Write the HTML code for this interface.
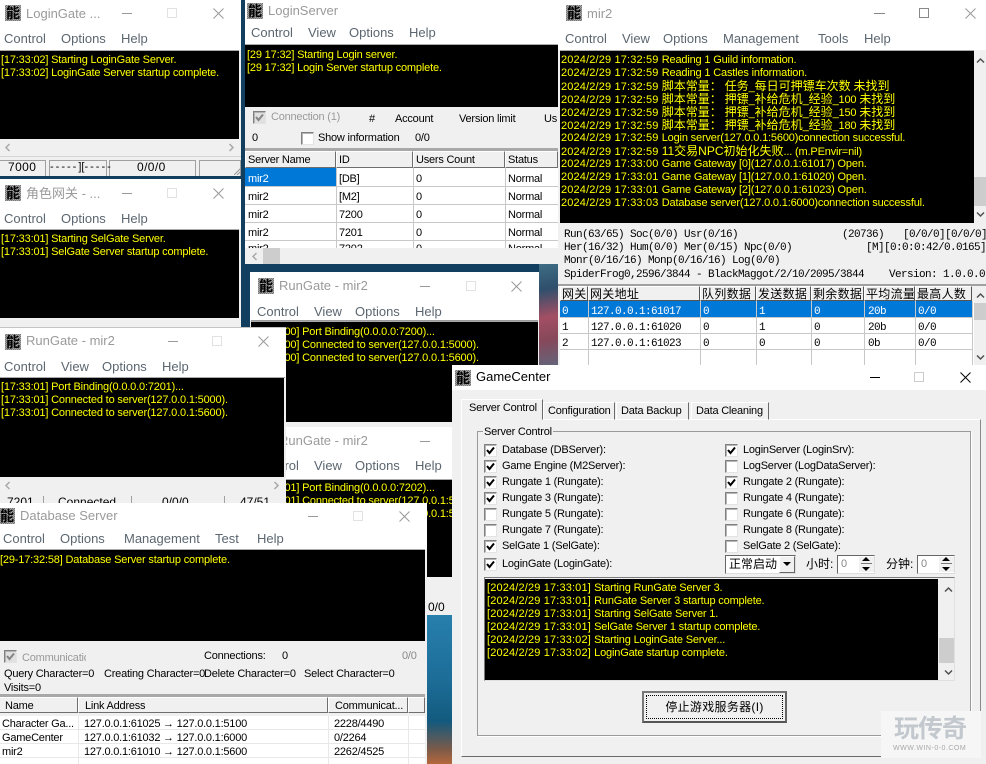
<!DOCTYPE html>
<html><head><meta charset="utf-8"><style>
html,body{margin:0;padding:0;background:#123e60}
#p{position:relative;width:986px;height:764px;overflow:hidden;background:#123e60;font-family:"Liberation Sans","Noto Sans CJK SC",sans-serif}
#p div,#p span,#p svg{position:absolute;white-space:nowrap;box-sizing:border-box}
#p b{font-weight:400}
#p b.z{font-size:12px;letter-spacing:0}
#p em{font-style:normal;letter-spacing:.15px}
.w{background:#f0f0f0;overflow:hidden}
.b{background:#fff}
.k{background:#000;overflow:hidden;box-shadow:0 -1px 0 #aaa}
.t{font-size:13px;line-height:16px;height:16px;color:#9a9a9a}
.m{font-size:13px;line-height:16px;height:16px;color:#5b6670}
.i{width:16px;height:16px;background:repeating-conic-gradient(#777 0 25%,#a8a8a8 0 50%) 0 0/2px 2px;color:#000;font-size:14px;line-height:16px;text-align:center;font-family:"Noto Sans CJK SC",sans-serif;font-weight:700;overflow:hidden}
.l{font-size:11px;line-height:13px;color:#ff0;letter-spacing:-.17px;height:13px;margin-top:1px}
.g{font-size:11px;line-height:14px;height:14px;color:#000;letter-spacing:-.22px}
.c{width:13px;height:13px;background:#fff;border:1px solid;border-color:#808080 #e3e3e3 #e3e3e3 #808080;box-shadow:inset 1px 1px 0 #b4b4b4}
.s{font-size:11px;line-height:14px;height:14px;color:#000;letter-spacing:-.22px}
.h{background:#f0f0f0;border:1px solid;border-color:#fff #6e6e6e #6e6e6e #fff;font-size:11px;line-height:16px;color:#000;padding-left:2px;overflow:hidden;letter-spacing:-.22px}
.r{background:#fff;overflow:hidden}
.ln{background:#c8c8c8}
.mono{font-family:"Liberation Mono","Noto Sans CJK SC",monospace;font-size:11px;letter-spacing:-.6px;line-height:13px;height:13px;color:#000;margin-top:2px}
.mt{font-family:"Liberation Mono",monospace;font-size:11px;letter-spacing:-.6px;line-height:16px;height:16px;color:#000;margin-top:2px}
.mh{font-size:12px;line-height:15px;height:15px;color:#000;background:#f0f0f0;border:1px solid;border-color:#fff #555 #555 #fff;padding-left:1px;overflow:hidden;letter-spacing:.3px}
</style></head><body><div id="p">
<svg width="0" height="0" style="left:0;top:0"><defs>
<symbol id="x" viewBox="0 0 11 11"><path d="M.5.5l10 10M10.500.5l-10 10" stroke="currentColor" fill="none"/></symbol>
<symbol id="cl" viewBox="0 0 7 9"><path d="M5.500 1L2 4.500 5.500 8" stroke="#a9a9a9" stroke-width="1.500" fill="none"/></symbol>
<symbol id="cr" viewBox="0 0 7 9"><path d="M1.500 1L5 4.500 1.500 8" stroke="#a9a9a9" stroke-width="1.500" fill="none"/></symbol>
<symbol id="cu" viewBox="0 0 9 7"><path d="M1 5.500L4.500 2 8 5.500" stroke="#505050" stroke-width="1.500" fill="none"/></symbol>
<symbol id="cd" viewBox="0 0 9 7"><path d="M1 1.500L4.500 5 8 1.500" stroke="#505050" stroke-width="1.500" fill="none"/></symbol>
<symbol id="ck" viewBox="0 0 11 11"><path d="M2 5l2.500 3L9 2.500" stroke="#000" stroke-width="2" fill="none"/></symbol>
</defs></svg>

<!-- wallpaper -->
<div style="left:539px;top:262px;width:20px;height:110px;background:linear-gradient(170deg,#3f6f86 0%,#2f4f6c 25%,#a34f63 50%,#86485a 70%,#5b6c82 100%)"></div>
<div style="left:427px;top:612px;width:26px;height:152px;background:linear-gradient(180deg,#2880ad 0%,#1c6d98 45%,#135a7e 72%,#7a5a4a 90%,#b5683c 100%)"></div>

<!-- LoginServer -->
<div class="w" style="left:245px;top:0;width:313px;height:264px">
 <div class="b" style="left:0;top:0;width:313px;height:44px"></div>
 <div class="i" style="left:2px;top:3px">能</div>
 <div class="t" style="left:23px;top:3px">LoginServer</div>
 <span class="m" style="left:6px;top:25px">Control</span><span class="m" style="left:63px;top:25px">View</span><span class="m" style="left:104px;top:25px">Options</span><span class="m" style="left:164px;top:25px">Help</span>
 <div class="k" style="left:0;top:45px;width:313px;height:62px">
  <div class="l" style="left:2px;top:3px">[29 17:32] Starting Login server.</div>
  <div class="l" style="left:2px;top:16px">[29 17:32] Login Server startup complete.</div>
 </div>
 <div class="c" style="left:8px;top:111px;background:#e0e0e0"><svg width="11" height="11" style="left:0;top:0"><use href="#ck" style="opacity:.4"/></svg></div>
 <span class="g" style="left:26px;top:110px;color:#9a9a9a">Connection (1)</span>
 <span class="g" style="left:124px;top:112px">#</span><span class="g" style="left:150px;top:112px">Account</span><span class="g" style="left:214px;top:112px">Version limit</span><span class="g" style="left:299px;top:112px">Us</span>
 <span class="g" style="left:7px;top:131px">0</span>
 <div class="c" style="left:56px;top:132px"></div><span class="g" style="left:73px;top:131px">Show information</span><span class="g" style="left:170px;top:131px">0/0</span>
 <div class="r" style="left:0;top:148px;width:313px;height:100px"></div>
 <div class="ln" style="left:0;top:148px;width:313px;height:3px;background:#a8a8a8"></div>
 <div class="h" style="left:0;top:151px;width:91px;height:17px">Server Name</div><div class="h" style="left:91px;top:151px;width:77px;height:17px">ID</div><div class="h" style="left:168px;top:151px;width:92px;height:17px">Users Count</div><div class="h" style="left:260px;top:151px;width:53px;height:17px">Status</div>
 <div style="left:0;top:168px;width:91px;height:18px;background:#0078d7"></div>
 <div class="ln" style="left:0;top:186px;width:313px;height:1px"></div><div class="ln" style="left:0;top:204px;width:313px;height:1px"></div><div class="ln" style="left:0;top:222px;width:313px;height:1px"></div><div class="ln" style="left:0;top:240px;width:313px;height:1px"></div>
 <div class="ln" style="left:91px;top:168px;width:1px;height:80px"></div><div class="ln" style="left:168px;top:168px;width:1px;height:80px"></div><div class="ln" style="left:260px;top:168px;width:1px;height:80px"></div>
 <span class="g" style="left:3px;top:172px;color:#fff">mir2</span><span class="g" style="left:94px;top:172px">[DB]</span><span class="g" style="left:171px;top:172px">0</span><span class="g" style="left:263px;top:172px">Normal</span>
 <span class="g" style="left:3px;top:190px">mir2</span><span class="g" style="left:94px;top:190px">[M2]</span><span class="g" style="left:171px;top:190px">0</span><span class="g" style="left:263px;top:190px">Normal</span>
 <span class="g" style="left:3px;top:208px">mir2</span><span class="g" style="left:94px;top:208px">7200</span><span class="g" style="left:171px;top:208px">0</span><span class="g" style="left:263px;top:208px">Normal</span>
 <span class="g" style="left:3px;top:226px">mir2</span><span class="g" style="left:94px;top:226px">7201</span><span class="g" style="left:171px;top:226px">0</span><span class="g" style="left:263px;top:226px">Normal</span>
 <span class="g" style="left:3px;top:242px">mir2</span><span class="g" style="left:94px;top:242px">7202</span><span class="g" style="left:171px;top:242px">0</span><span class="g" style="left:263px;top:242px">Normal</span>
 <div style="left:0;top:248px;width:313px;height:16px;background:#f0f0f0"></div>
 <svg width="7" height="9" style="left:6px;top:252px"><use href="#cl"/></svg>
 <div style="left:18px;top:248px;width:17px;height:16px;background:#cdcdcd"></div>
</div>

<!-- LoginGate -->
<div class="w" style="left:0;top:0;width:241px;height:176px">
 <div class="b" style="left:0;top:0;width:241px;height:50px"></div>
 <div class="i" style="left:5px;top:5px">能</div>
 <div class="t" style="left:26px;top:6px">LoginGate ...</div>
 <div style="left:122px;top:13px;width:10px;height:1px;background:#999"></div><div style="left:167px;top:8px;width:10px;height:10px;border:1px solid #e2e2e2"></div><svg width="11" height="11" style="left:213px;top:8px;color:#999"><use href="#x"/></svg>
 <span class="m" style="left:4px;top:31px">Control</span><span class="m" style="left:61px;top:31px">Options</span><span class="m" style="left:121px;top:31px">Help</span>
 <div class="k" style="left:0;top:51px;width:239px;height:88px">
  <div class="l" style="left:1px;top:2px">[17:33:02] Starting LoginGate Server.</div>
  <div class="l" style="left:1px;top:15px">[17:33:02] LoginGate Server startup complete.</div>
 </div>
 <svg width="7" height="9" style="left:4px;top:143px"><use href="#cl"/></svg><svg width="7" height="9" style="left:228px;top:143px"><use href="#cr"/></svg>
 <div style="left:0;top:156px;width:241px;height:1px;background:#d5d5d5"></div>
 <div style="left:0;top:160px;width:46px;height:16px;border-top:1px solid #a0a0a0;border-right:1px solid #a0a0a0"></div><div style="left:49px;top:160px;width:58px;height:16px;border:1px solid #a0a0a0;border-bottom:0"></div><div style="left:109px;top:160px;width:87px;height:16px;border:1px solid #a0a0a0;border-bottom:0"></div><div style="left:199px;top:160px;width:42px;height:16px;border:1px solid #a0a0a0;border-bottom:0"></div>
 <span class="s" style="left:8px;top:160px;font-size:12px;letter-spacing:.4px">7000</span><span class="s" style="left:50px;top:160px;font-size:11px;letter-spacing:2px">-----<b style="letter-spacing:0">][</b>-----</span><span class="s" style="left:137px;top:160px;font-size:12px;letter-spacing:.4px">0/0/0</span>
 <svg width="7" height="7" style="left:234px;top:168px"><path d="M7 0L0 7M7 3L3 7M7 6L6 7" stroke="#999" fill="none"/></svg>
</div>

<!-- SelGate -->
<div class="w" style="left:0;top:179px;width:241px;height:155px">
 <div class="b" style="left:0;top:0;width:241px;height:50px"></div>
 <div class="i" style="left:5px;top:6px">能</div>
 <div class="t" style="left:26px;top:7px">角色网关 - ...</div>
 <div style="left:122px;top:14px;width:10px;height:1px;background:#999"></div><div style="left:167px;top:9px;width:10px;height:10px;border:1px solid #e2e2e2"></div><svg width="11" height="11" style="left:213px;top:9px;color:#999"><use href="#x"/></svg>
 <span class="m" style="left:4px;top:32px">Control</span><span class="m" style="left:61px;top:32px">Options</span><span class="m" style="left:121px;top:32px">Help</span>
 <div class="k" style="left:0;top:51px;width:239px;height:88px">
  <div class="l" style="left:1px;top:2px">[17:33:01] Starting SelGate Server.</div>
  <div class="l" style="left:1px;top:15px">[17:33:01] SelGate Server startup complete.</div>
 </div>
</div>

<!-- RunGate 7200 -->
<div class="w" style="left:250px;top:272px;width:289px;height:155px">
 <div class="b" style="left:0;top:0;width:289px;height:48px"></div>
 <div class="i" style="left:8px;top:6px">能</div>
 <div class="t" style="left:29px;top:6px">RunGate - mir2</div>
 <div style="left:170px;top:14px;width:10px;height:1px;background:#999"></div><div style="left:216px;top:9px;width:10px;height:10px;border:1px solid #e2e2e2"></div><svg width="11" height="11" style="left:261px;top:9px;color:#999"><use href="#x"/></svg>
 <span class="m" style="left:7px;top:32px">Control</span><span class="m" style="left:64px;top:32px">View</span><span class="m" style="left:105px;top:32px">Options</span><span class="m" style="left:165px;top:32px">Help</span>
 <div style="left:1px;top:48px;width:287px;height:2px;background:#9a9a9a"></div>
 <div class="k" style="left:1px;top:50px;width:287px;height:100px">
  <div class="l" style="left:1px;top:3px">[17:33:00] Port Binding(0.0.0.0:7200)...</div>
  <div class="l" style="left:1px;top:16px">[17:33:00] Connected to server(127.0.0.1:5000).</div>
  <div class="l" style="left:1px;top:29px">[17:33:00] Connected to server(127.0.0.1:5600).</div>
 </div>
</div>

<!-- RunGate 7202 -->
<div class="w" style="left:250px;top:427px;width:202px;height:188px">
 <div class="b" style="left:0;top:0;width:202px;height:52px"></div>
 <div class="t" style="left:29px;top:6px">RunGate - mir2</div>
 <div style="left:170px;top:14px;width:10px;height:1px;background:#999"></div>
 <span class="m" style="left:7px;top:31px">Control</span><span class="m" style="left:64px;top:31px">View</span><span class="m" style="left:105px;top:31px">Options</span><span class="m" style="left:165px;top:31px">Help</span>
 <div class="k" style="left:1px;top:53px;width:201px;height:97px">
  <div class="l" style="left:1px;top:1px">[17:33:01] Port Binding(0.0.0.0:7202)...</div>
  <div class="l" style="left:1px;top:14px">[17:33:01] Connected to server(127.0.0.1:5000).</div>
  <div class="l" style="left:1px;top:27px">[17:33:01] Connected to server(127.0.0.1:5600).</div>
 </div>
 <span class="s" style="left:178px;top:173px;font-size:12px;letter-spacing:0">0/0</span>
</div>

<!-- RunGate 7201 -->
<div class="w" style="left:0;top:327px;width:286px;height:180px;border-top:1px solid #c4c4c4">
 <div class="b" style="left:0;top:0;width:286px;height:49px"></div>
 <div class="i" style="left:5px;top:6px">能</div>
 <div class="t" style="left:26px;top:5px">RunGate - mir2</div>
 <div style="left:168px;top:13px;width:10px;height:1px;background:#999"></div><div style="left:212px;top:8px;width:10px;height:10px;border:1px solid #e2e2e2"></div><svg width="11" height="11" style="left:258px;top:8px;color:#999"><use href="#x"/></svg>
 <span class="m" style="left:4px;top:31px">Control</span><span class="m" style="left:61px;top:31px">View</span><span class="m" style="left:102px;top:31px">Options</span><span class="m" style="left:162px;top:31px">Help</span>
 <div style="left:0;top:49px;width:285px;height:1px;background:#9a9a9a"></div>
 <div class="k" style="left:0;top:50px;width:284px;height:99px">
  <div class="l" style="left:1px;top:2px">[17:33:01] Port Binding(0.0.0.0:7201)...</div>
  <div class="l" style="left:1px;top:15px">[17:33:01] Connected to server(127.0.0.1:5000).</div>
  <div class="l" style="left:1px;top:28px">[17:33:01] Connected to server(127.0.0.1:5600).</div>
 </div>
 <svg width="7" height="9" style="left:4px;top:153px"><use href="#cl"/></svg><svg width="7" height="9" style="left:273px;top:153px"><use href="#cr"/></svg>
 <span class="s" style="left:7px;top:167px;font-size:12px;letter-spacing:0">7201</span><span class="s" style="left:58px;top:167px;font-size:12px;letter-spacing:0">Connected</span><span class="s" style="left:162px;top:167px;font-size:12px;letter-spacing:0">0/0/0</span><span class="s" style="left:240px;top:167px;font-size:12px;letter-spacing:0">47/51</span>
 <div style="left:43px;top:168px;width:1px;height:10px;background:#a0a0a0"></div><div style="left:131px;top:168px;width:1px;height:10px;background:#a0a0a0"></div><div style="left:224px;top:168px;width:1px;height:10px;background:#a0a0a0"></div>
</div>

<!-- Database Server -->
<div class="w" style="left:0;top:503px;width:427px;height:261px">
 <div class="b" style="left:0;top:0;width:427px;height:46px"></div>
 <div class="i" style="left:-1px;top:5px">能</div>
 <div class="t" style="left:20px;top:5px">Database Server</div>
 <div style="left:308px;top:13px;width:10px;height:1px;background:#999"></div><div style="left:353px;top:8px;width:10px;height:10px;border:1px solid #e2e2e2"></div><svg width="11" height="11" style="left:399px;top:8px;color:#999"><use href="#x"/></svg>
 <span class="m" style="left:3px;top:28px">Control</span><span class="m" style="left:60px;top:28px">Options</span><span class="m" style="left:124px;top:28px">Management</span><span class="m" style="left:215px;top:28px">Test</span><span class="m" style="left:257px;top:28px">Help</span>
 <div class="k" style="left:0;top:47px;width:425px;height:91px">
  <div class="l" style="left:0;top:3px">[29-17:32:58] Database Server startup complete.</div>
 </div>
 <div class="c" style="left:4px;top:147px;background:#e0e0e0"><svg width="11" height="11" style="left:0;top:0"><use href="#ck" style="opacity:.4"/></svg></div>
 <span class="g" style="left:22px;top:148px;width:64px;overflow:hidden;color:#9a9a9a">Communication</span>
 <span class="g" style="left:204px;top:146px">Connections:</span><span class="g" style="left:282px;top:146px">0</span><span class="g" style="left:402px;top:146px;color:#888">0/0</span>
 <span class="g" style="left:4px;top:164px">Query Character=0</span><span class="g" style="left:104px;top:164px">Creating Character=0</span><span class="g" style="left:204px;top:164px">Delete Character=0</span><span class="g" style="left:304px;top:164px">Select Character=0</span>
 <span class="g" style="left:4px;top:178px">Visits=0</span>
 <div class="r" style="left:0;top:191px;width:425px;height:70px"></div>
 <div style="left:0;top:191px;width:425px;height:3px;background:#a8a8a8"></div>
 <div class="h" style="left:-1px;top:194px;width:79px;height:16px;padding-left:5px">Name</div><div class="h" style="left:78px;top:194px;width:250px;height:16px;padding-left:6px">Link Address</div><div class="h" style="left:328px;top:194px;width:80px;height:16px;padding-left:6px">Communicat...</div><div class="h" style="left:408px;top:194px;width:17px;height:16px"></div>
 <div style="left:0;top:210px;width:425px;height:3px;background:#f0f0f0"></div>
 <div class="ln" style="left:0;top:226px;width:425px;height:1px;background:#e8e8e8"></div><div class="ln" style="left:0;top:240px;width:425px;height:1px;background:#e8e8e8"></div><div class="ln" style="left:0;top:254px;width:425px;height:1px;background:#e8e8e8"></div>
 <div class="ln" style="left:78px;top:213px;width:1px;height:48px;background:#e8e8e8"></div><div class="ln" style="left:328px;top:213px;width:1px;height:48px;background:#e8e8e8"></div><div class="ln" style="left:408px;top:213px;width:1px;height:48px;background:#e8e8e8"></div>
 <span class="g" style="left:2px;top:214px">Character Ga...</span><span class="g" style="left:84px;top:214px">127.0.0.1:61025 → 127.0.0.1:5100</span><span class="g" style="left:334px;top:214px">2228/4490</span>
 <span class="g" style="left:2px;top:228px">GameCenter</span><span class="g" style="left:84px;top:228px">127.0.0.1:61032 → 127.0.0.1:6000</span><span class="g" style="left:334px;top:228px">0/2264</span>
 <span class="g" style="left:2px;top:242px">mir2</span><span class="g" style="left:84px;top:242px">127.0.0.1:61010 → 127.0.0.1:5600</span><span class="g" style="left:334px;top:242px">2262/4525</span>
</div>

<!-- mir2 -->
<div class="w" style="left:558px;top:0;width:428px;height:365px">
 <div class="b" style="left:0;top:0;width:428px;height:50px"></div>
 <div class="i" style="left:8px;top:5px">能</div>
 <div class="t" style="left:29px;top:6px">mir2</div>
 <div style="left:316px;top:13px;width:11px;height:1px;background:#888"></div><div style="left:361px;top:8px;width:10px;height:10px;border:1px solid #888"></div><svg width="11" height="11" style="left:407px;top:8px;color:#999"><use href="#x"/></svg>
 <span class="m" style="left:7px;top:31px">Control</span><span class="m" style="left:64px;top:31px">View</span><span class="m" style="left:105px;top:31px">Options</span><span class="m" style="left:165px;top:31px">Management</span><span class="m" style="left:260px;top:31px">Tools</span><span class="m" style="left:306px;top:31px">Help</span>
 <div class="k" style="left:2px;top:51px;width:414px;height:172px">
  <div class="l" style="left:1px;top:2px"><em>2024/2/29 17:32:59 </em>Reading 1 Guild information.</div>
  <div class="l" style="left:1px;top:15px"><em>2024/2/29 17:32:59 </em>Reading 1 Castles information.</div>
  <div class="l" style="left:1px;top:28px"><em>2024/2/29 17:32:59 </em><b class="z">脚本常量：</b> <b class="z">任务</b>_<b class="z">每日可押镖车次数</b> <b class="z">未找到</b></div>
  <div class="l" style="left:1px;top:41px"><em>2024/2/29 17:32:59 </em><b class="z">脚本常量：</b> <b class="z">押镖</b>_<b class="z">补给危机</b>_<b class="z">经验</b>_100 <b class="z">未找到</b></div>
  <div class="l" style="left:1px;top:54px"><em>2024/2/29 17:32:59 </em><b class="z">脚本常量：</b> <b class="z">押镖</b>_<b class="z">补给危机</b>_<b class="z">经验</b>_150 <b class="z">未找到</b></div>
  <div class="l" style="left:1px;top:67px"><em>2024/2/29 17:32:59 </em><b class="z">脚本常量：</b> <b class="z">押镖</b>_<b class="z">补给危机</b>_<b class="z">经验</b>_180 <b class="z">未找到</b></div>
  <div class="l" style="left:1px;top:80px"><em>2024/2/29 17:32:59 </em>Login server(127.0.0.1:5600)connection successful.</div>
  <div class="l" style="left:1px;top:93px"><em>2024/2/29 17:32:59 </em><b class="z">11交易NPC初始化失败</b>... (m.PEnvir=nil)</div>
  <div class="l" style="left:1px;top:106px"><em>2024/2/29 17:33:00 </em>Game Gateway [0](127.0.0.1:61017) Open.</div>
  <div class="l" style="left:1px;top:119px"><em>2024/2/29 17:33:01 </em>Game Gateway [1](127.0.0.1:61020) Open.</div>
  <div class="l" style="left:1px;top:132px"><em>2024/2/29 17:33:01 </em>Game Gateway [2](127.0.0.1:61023) Open.</div>
  <div class="l" style="left:1px;top:145px"><em>2024/2/29 17:33:03 </em>Database server(127.0.0.1:6000)connection successful.</div>
 </div>
 <svg width="9" height="7" style="left:418px;top:57px"><use href="#cu"/></svg>
 <div style="left:416px;top:177px;width:12px;height:29px;background:#cdcdcd"></div>
 <svg width="9" height="7" style="left:418px;top:211px"><use href="#cd"/></svg>
 <span class="mono" style="left:6px;top:227px">Run(63/65) Soc(0/0) Usr(0/16)</span><span class="mono" style="left:284px;top:227px">(20736)</span><span class="mono" style="left:345px;top:227px">[0/0/0][0/0/0]</span>
 <span class="mono" style="left:6px;top:240px">Her(16/32) Hum(0/0) Mer(0/15) Npc(0/0)</span><span class="mono" style="left:308px;top:240px">[M][0:0:0:42/0.0165]</span>
 <span class="mono" style="left:6px;top:253px">Monr(0/16/16) Monp(0/16/16) Log(0/0)</span>
 <span class="mono" style="left:6px;top:267px">SpiderFrog0,2596/3844 - BlackMaggot/2/10/2095/3844</span><span class="mono" style="left:331px;top:267px">Version: 1.0.0.0</span>
 <div style="left:0;top:284px;width:428px;height:2px;background:#a0a0a0"></div>
 <div class="r" style="left:2px;top:301px;width:414px;height:64px"></div>
 <div class="mh" style="left:2px;top:286px;width:28px;height:15px">网关</div><div class="mh" style="left:30px;top:286px;width:112px;height:15px">网关地址</div><div class="mh" style="left:142px;top:286px;width:56px;height:15px">队列数据</div><div class="mh" style="left:198px;top:286px;width:55px;height:15px">发送数据</div><div class="mh" style="left:253px;top:286px;width:53px;height:15px">剩余数据</div><div class="mh" style="left:306px;top:286px;width:51px;height:15px">平均流量</div><div class="mh" style="left:357px;top:286px;width:57px;height:15px">最高人数</div>
 <div style="left:2px;top:301px;width:412px;height:16px;background:#0078d7"></div>
 <div class="ln" style="left:2px;top:317px;width:412px;height:1px"></div><div class="ln" style="left:2px;top:333px;width:412px;height:1px"></div><div class="ln" style="left:2px;top:349px;width:412px;height:1px"></div>
 <div class="ln" style="left:30px;top:301px;width:1px;height:64px"></div><div class="ln" style="left:142px;top:301px;width:1px;height:64px"></div><div class="ln" style="left:198px;top:301px;width:1px;height:64px"></div><div class="ln" style="left:253px;top:301px;width:1px;height:64px"></div><div class="ln" style="left:306px;top:301px;width:1px;height:64px"></div><div class="ln" style="left:357px;top:301px;width:1px;height:64px"></div><div class="ln" style="left:414px;top:301px;width:1px;height:64px"></div>
 <span class="mt" style="left:4px;top:302px;color:#fff">0</span><span class="mt" style="left:33px;top:302px;color:#fff">127.0.0.1:61017</span><span class="mt" style="left:145px;top:302px;color:#fff">0</span><span class="mt" style="left:201px;top:302px;color:#fff">1</span><span class="mt" style="left:256px;top:302px;color:#fff">0</span><span class="mt" style="left:310px;top:302px;color:#fff">20b</span><span class="mt" style="left:360px;top:302px;color:#fff">0/0</span>
 <span class="mt" style="left:4px;top:318px">1</span><span class="mt" style="left:33px;top:318px">127.0.0.1:61020</span><span class="mt" style="left:145px;top:318px">0</span><span class="mt" style="left:201px;top:318px">1</span><span class="mt" style="left:256px;top:318px">0</span><span class="mt" style="left:310px;top:318px">20b</span><span class="mt" style="left:360px;top:318px">0/0</span>
 <span class="mt" style="left:4px;top:334px">2</span><span class="mt" style="left:33px;top:334px">127.0.0.1:61023</span><span class="mt" style="left:145px;top:334px">0</span><span class="mt" style="left:201px;top:334px">0</span><span class="mt" style="left:256px;top:334px">0</span><span class="mt" style="left:310px;top:334px">0b</span><span class="mt" style="left:360px;top:334px">0/0</span>
 <svg width="9" height="7" style="left:418px;top:292px"><use href="#cu"/></svg>
 <div style="left:416px;top:303px;width:12px;height:17px;background:#cdcdcd"></div>
 <svg width="9" height="7" style="left:418px;top:354px"><use href="#cd"/></svg>
</div>

<!-- GameCenter -->
<div class="w" style="left:452px;top:365px;width:534px;height:399px">
 <div class="b" style="left:0;top:0;width:534px;height:25px"></div>
 <div class="i" style="left:3px;top:5px">能</div>
 <div class="t" style="left:24px;top:4px;color:#000">GameCenter</div>
 <div style="left:418px;top:12px;width:10px;height:1px;background:#000"></div><div style="left:462px;top:7px;width:10px;height:10px;border:1px solid #ccc"></div><svg width="11" height="11" style="left:508px;top:7px;color:#000"><use href="#x"/></svg>
 <!-- tabs / page -->
 <div style="left:9px;top:54px;width:520px;height:338px;border:1px solid;border-color:#fff #8a8a8a #6a6a6a #fff"></div>
 <div class="s" style="left:9px;top:34px;width:82px;height:21px;background:#f0f0f0;border:1px solid;border-color:#fff #6a6a6a #f0f0f0 #fff;line-height:16px;padding-left:7px">Server Control</div>
 <div class="s" style="left:91px;top:37px;width:72px;height:18px;border:1px solid;border-color:#fff #6a6a6a #fff #fff;line-height:16px;padding-left:4px">Configuration</div>
 <div class="s" style="left:164px;top:37px;width:73px;height:18px;border:1px solid;border-color:#fff #6a6a6a #fff #fff;line-height:16px;padding-left:4px">Data Backup</div>
 <div class="s" style="left:239px;top:37px;width:78px;height:18px;border:1px solid;border-color:#fff #6a6a6a #fff #fff;line-height:16px;padding-left:4px">Data Cleaning</div>
 <!-- group -->
 <div style="left:25px;top:66px;width:494px;height:305px;border:1px solid #9a9a9a;box-shadow:1px 1px 0 #fff"></div>
 <span class="s" style="left:31px;top:60px;background:#f0f0f0;padding:0 1px;height:15px">Server Control</span>
 <div class="c" style="left:32px;top:79px"><svg width="11" height="11" style="left:0;top:0"><use href="#ck"/></svg></div><span class="s" style="left:50px;top:78px">Database (DBServer):</span>
 <div class="c" style="left:32px;top:95px"><svg width="11" height="11" style="left:0;top:0"><use href="#ck"/></svg></div><span class="s" style="left:50px;top:94px">Game Engine (M2Server):</span>
 <div class="c" style="left:32px;top:111px"><svg width="11" height="11" style="left:0;top:0"><use href="#ck"/></svg></div><span class="s" style="left:50px;top:110px">Rungate 1 (Rungate):</span>
 <div class="c" style="left:32px;top:127px"><svg width="11" height="11" style="left:0;top:0"><use href="#ck"/></svg></div><span class="s" style="left:50px;top:126px">Rungate 3 (Rungate):</span>
 <div class="c" style="left:32px;top:143px"></div><span class="s" style="left:50px;top:142px">Rungate 5 (Rungate):</span>
 <div class="c" style="left:32px;top:159px"></div><span class="s" style="left:50px;top:158px">Rungate 7 (Rungate):</span>
 <div class="c" style="left:32px;top:175px"><svg width="11" height="11" style="left:0;top:0"><use href="#ck"/></svg></div><span class="s" style="left:50px;top:174px">SelGate 1 (SelGate):</span>
 <div class="c" style="left:32px;top:193px"><svg width="11" height="11" style="left:0;top:0"><use href="#ck"/></svg></div><span class="s" style="left:50px;top:192px">LoginGate (LoginGate):</span>
 <div class="c" style="left:273px;top:79px"><svg width="11" height="11" style="left:0;top:0"><use href="#ck"/></svg></div><span class="s" style="left:291px;top:78px">LoginServer (LoginSrv):</span>
 <div class="c" style="left:273px;top:95px"></div><span class="s" style="left:291px;top:94px">LogServer (LogDataServer):</span>
 <div class="c" style="left:273px;top:111px"><svg width="11" height="11" style="left:0;top:0"><use href="#ck"/></svg></div><span class="s" style="left:291px;top:110px">Rungate 2 (Rungate):</span>
 <div class="c" style="left:273px;top:127px"></div><span class="s" style="left:291px;top:126px">Rungate 4 (Rungate):</span>
 <div class="c" style="left:273px;top:143px"></div><span class="s" style="left:291px;top:142px">Rungate 6 (Rungate):</span>
 <div class="c" style="left:273px;top:159px"></div><span class="s" style="left:291px;top:158px">Rungate 8 (Rungate):</span>
 <div class="c" style="left:273px;top:175px"></div><span class="s" style="left:291px;top:174px">SelGate 2 (SelGate):</span>
 <!-- combo and spins -->
 <div style="left:273px;top:190px;width:71px;height:19px;background:#fff;border:1px solid;border-color:#666 #ddd #ddd #666;font-size:12px;line-height:17px;padding-left:3px">正常启动</div>
 <div style="left:327px;top:191px;width:16px;height:17px;background:#f0f0f0;border:1px solid;border-color:#fff #666 #666 #fff"></div>
 <div style="left:331px;top:197px;width:0;height:0;border:4px solid transparent;border-top:4px solid #000"></div>
 <span class="s" style="left:354px;top:192px;font-size:12px;letter-spacing:0">小时:</span>
 <div style="left:385px;top:190px;width:38px;height:19px;background:#fff;border:1px solid;border-color:#666 #ddd #ddd #666;font-size:11px;line-height:16px;padding-left:3px;color:#888">0</div>
 <div style="left:407px;top:192px;width:15px;height:15px;background:#f0f0f0"></div>
 <div style="left:410px;top:192px;width:0;height:0;border:4px solid transparent;border-bottom:4px solid #000;border-top:0"></div><div style="left:410px;top:202px;width:0;height:0;border:4px solid transparent;border-top:4px solid #000;border-bottom:0"></div><div style="left:409px;top:198px;width:11px;height:1px;background:#777"></div>
 <span class="s" style="left:434px;top:192px;font-size:12px;letter-spacing:0">分钟:</span>
 <div style="left:465px;top:190px;width:38px;height:19px;background:#fff;border:1px solid;border-color:#666 #ddd #ddd #666;font-size:11px;line-height:16px;padding-left:3px;color:#888">0</div>
 <div style="left:487px;top:192px;width:15px;height:15px;background:#f0f0f0"></div>
 <div style="left:490px;top:192px;width:0;height:0;border:4px solid transparent;border-bottom:4px solid #000;border-top:0"></div><div style="left:490px;top:202px;width:0;height:0;border:4px solid transparent;border-top:4px solid #000;border-bottom:0"></div><div style="left:489px;top:198px;width:11px;height:1px;background:#777"></div>
 <!-- log -->
 <div style="left:32px;top:212px;width:471px;height:104px;background:#f0f0f0;border:1px solid;border-color:#7a7a7a #e0e0e0 #e0e0e0 #7a7a7a"></div>
 <div class="k" style="left:33px;top:214px;width:453px;height:101px;box-shadow:none">
  <div class="l" style="left:2px;top:2px"><em>[2024/2/29 17:33:01] </em>Starting RunGate Server 3.</div>
  <div class="l" style="left:2px;top:15px"><em>[2024/2/29 17:33:01] </em>RunGate Server 3 startup complete.</div>
  <div class="l" style="left:2px;top:28px"><em>[2024/2/29 17:33:01] </em>Starting SelGate Server 1.</div>
  <div class="l" style="left:2px;top:41px"><em>[2024/2/29 17:33:01] </em>SelGate Server 1 startup complete.</div>
  <div class="l" style="left:2px;top:54px"><em>[2024/2/29 17:33:02] </em>Starting LoginGate Server...</div>
  <div class="l" style="left:2px;top:67px"><em>[2024/2/29 17:33:02] </em>LoginGate startup complete.</div>
 </div>
 <svg width="9" height="7" style="left:492px;top:221px"><use href="#cu"/></svg>
 <div style="left:487px;top:273px;width:15px;height:25px;background:#cdcdcd"></div>
 <svg width="9" height="7" style="left:492px;top:304px"><use href="#cd"/></svg>
 <!-- button -->
 <div style="left:190px;top:326px;width:145px;height:32px;background:#f0f0f0;border:2px solid;border-color:#777 #666 #555 #777"></div>
 <div style="left:194px;top:330px;width:137px;height:24px;border:1px dotted #000;font-size:12px;line-height:22px;text-align:center;letter-spacing:.3px;color:#000">停止游戏服务器(I)</div>
 <!-- watermark -->
 <div style="left:429px;top:346px;width:100px;height:47px;background:#f6f6f6;overflow:hidden">
  <span style="left:13px;top:4px;font-size:25px;line-height:28px;color:#c2c8ce;letter-spacing:-1px;font-weight:700">玩传奇</span>
  <span style="left:12px;top:33px;font-size:7px;line-height:10px;color:#a8a8a8;letter-spacing:.5px">WWW.WIN-0-0.COM</span>
 </div>
</div>
</div></body></html>
